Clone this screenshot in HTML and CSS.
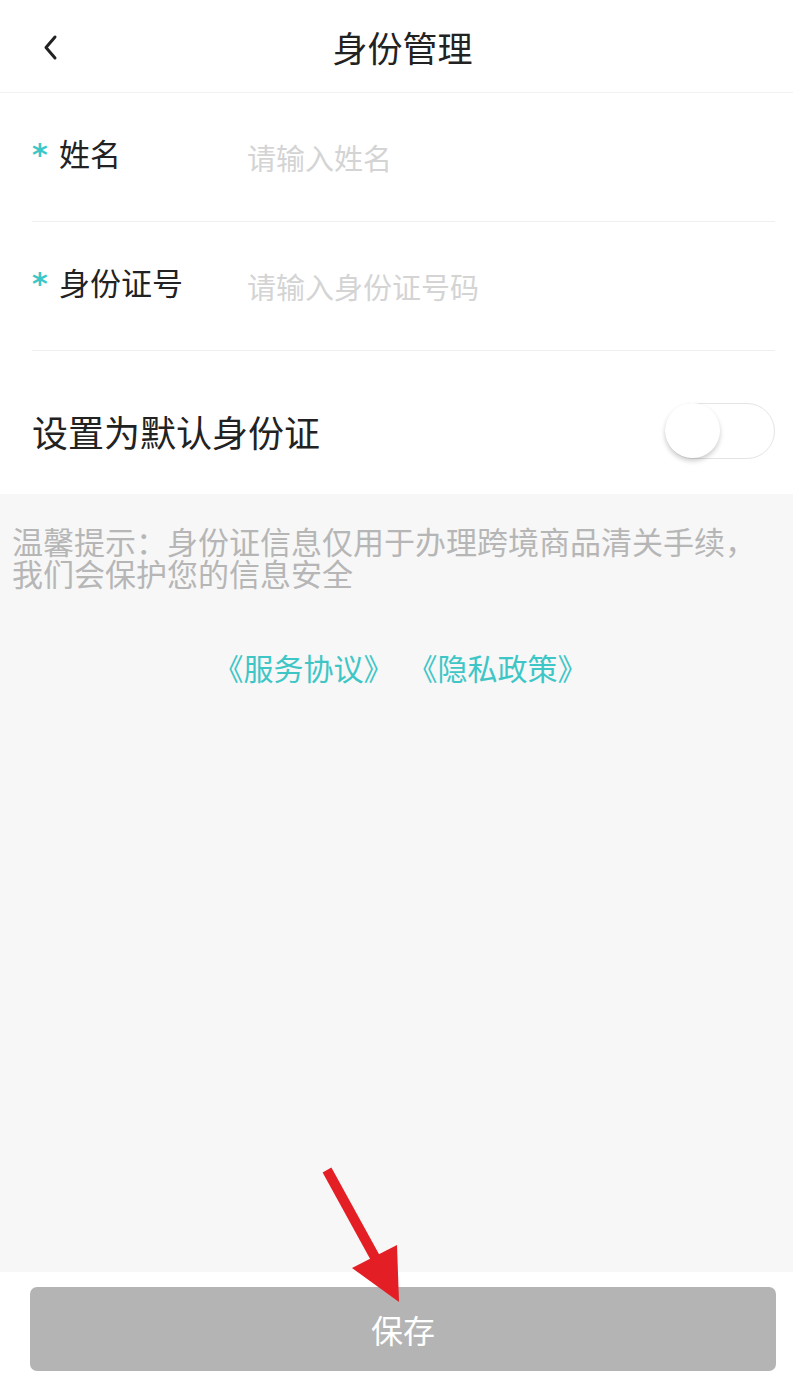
FILE: index.html
```html
<!DOCTYPE html>
<html lang="zh-CN">
<head>
    <meta charset="UTF-8">
    <meta name="viewport" content="width=device-width, initial-scale=1.0">
    <title>身份管理</title>
    <link rel="stylesheet" href="styles.css">
</head>
<body>
    <div class="page">
        <header class="header">
            <span class="back">
                <svg width="20" height="28" viewBox="0 0 20 28">
                    <path d="M15 4 L6 14.5 L15 25" fill="none" stroke="#222" stroke-width="3" stroke-linecap="round" stroke-linejoin="round"/>
                </svg>
            </span>
            <h1 class="title">身份管理</h1>
        </header>

        <div class="form">
            <div class="field">
                <div class="label"><span class="star">*</span>姓名</div>
                <div class="placeholder">请输入姓名</div>
            </div>
            <div class="field">
                <div class="label"><span class="star">*</span>身份证号</div>
                <div class="placeholder">请输入身份证号码</div>
            </div>
            <div class="switch-row">
                <div class="switch-label">设置为默认身份证</div>
                <div class="switch">
                    <div class="knob"></div>
                </div>
            </div>
        </div>

        <div class="info">
            <p class="tip">温馨提示：身份证信息仅用于办理跨境商品清关手续，我们会保护您的信息安全</p>
            <div class="links"><a>《服务协议》</a><a>《隐私政策》</a></div>
        </div>

        <div class="footer">
            <button class="save">保存</button>
        </div>

        <svg class="arrow" width="95" height="150" viewBox="0 0 95 150">
            <line x1="12" y1="10" x2="62" y2="101" stroke="#e31e24" stroke-width="10"/>
            <polygon points="37,108 82,85 84,142" fill="#e31e24"/>
        </svg>
    </div>
</body>
</html>
```

FILE: styles.css
```css
body {
    margin: 0;
    font-family: "Noto Sans CJK SC", "Noto Sans", sans-serif;
    background: #fff;
    color: #222;
}
.page {
    position: relative;
    height: 1378px;
    display: flex;
    flex-direction: column;
}
.header {
    height: 92px;
    border-bottom: 1px solid #f2f2f2;
    display: flex;
    align-items: center;
    justify-content: center;
    padding-left: 12px;
    position: relative;
}
.back {
    position: absolute;
    left: 40px;
    top: 33px;
}
.title {
    margin: 0;
    font-size: 35px;
    font-weight: normal;
    line-height: 1;
}
.form {
    padding: 0 18px 0 32px;
}
.field {
    height: 128px;
    border-bottom: 1px solid #efefef;
    display: flex;
    align-items: center;
}
.label {
    width: 215px;
    font-size: 31px;
    line-height: 1;
    margin-bottom: 8px;
    display: flex;
    align-items: flex-start;
}
.star {
    color: #3cc6c6;
    font-family: "DejaVu Sans", sans-serif;
    font-size: 30px;
    font-weight: bold;
    line-height: 1;
    width: 27px;
    margin-top: 3px;
}
.placeholder {
    font-size: 29px;
    line-height: 1;
    color: #d4d4d4;
}
.switch-row {
    height: 143px;
    display: flex;
    align-items: center;
    justify-content: space-between;
    padding-top: 16px;
    box-sizing: border-box;
}
.switch-label {
    font-size: 36px;
    line-height: 1;
}
.switch {
    width: 110px;
    height: 56px;
    border: 1.5px solid #e4e4e4;
    border-radius: 29px;
    box-sizing: border-box;
    position: relative;
}
.knob {
    position: absolute;
    left: -1px;
    top: -1px;
    width: 55px;
    height: 55px;
    border-radius: 50%;
    background: #fff;
    box-shadow: 0 3px 5px rgba(0, 0, 0, 0.2);
}
.info {
    flex: 1;
    background: #f7f7f7;
    padding: 31px 12px 0;
}
.tip {
    margin: 0;
    font-size: 31px;
    line-height: 32px;
    color: #b6b6b6;
}
.links {
    margin-top: 58px;
    display: flex;
    justify-content: center;
    gap: 14px;
    padding-left: 8px;
    font-size: 30px;
    line-height: 40px;
    color: #3ec6c6;
}
.footer {
    height: 106px;
    padding: 15px 17px 0 30px;
    box-sizing: border-box;
}
.save {
    width: 100%;
    height: 84px;
    border: none;
    border-radius: 7px;
    background: #b4b4b4;
    color: #fff;
    font-family: inherit;
    font-size: 32px;
}
.arrow {
    position: absolute;
    left: 315px;
    top: 1160px;
}
```
